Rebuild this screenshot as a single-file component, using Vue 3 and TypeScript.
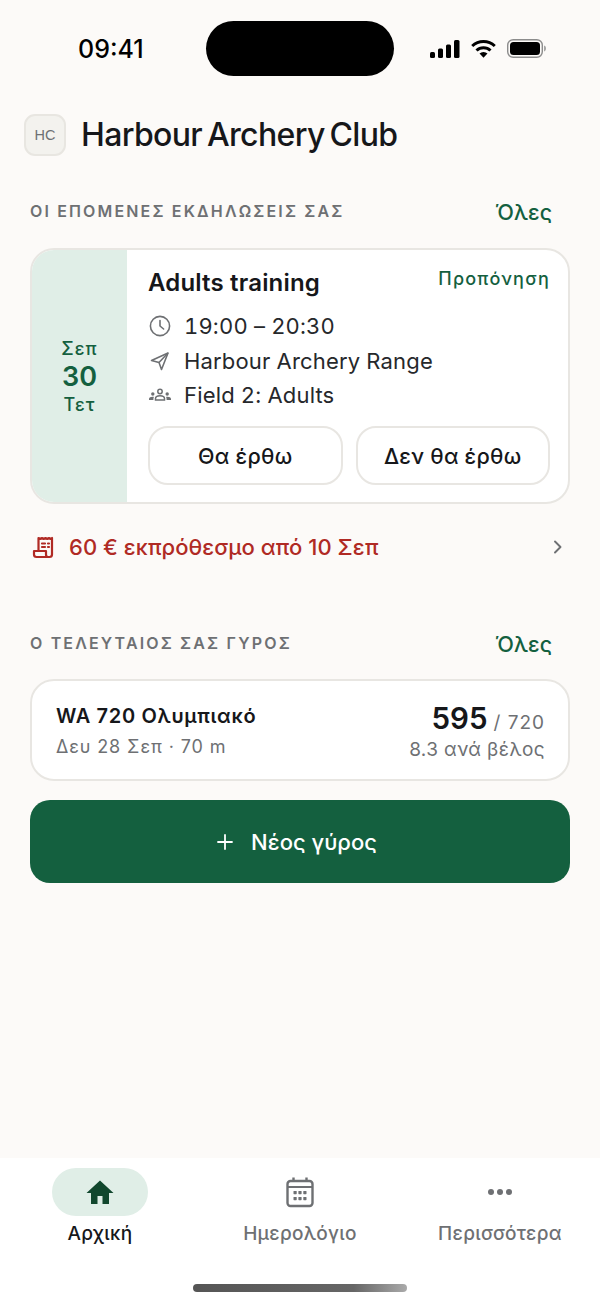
<script setup lang="ts">
const details = [
  { id: 'clock', text: '19:00 – 20:30' },
  { id: 'nav', text: 'Harbour Archery Range' },
  { id: 'group', text: 'Field 2: Adults' },
]
</script>

<template>
  <div class="page">
    <div class="status">
      <span class="time">09:41</span>
      <div class="island"></div>
      <div class="sys">
        <svg width="30" height="18" viewBox="0 0 30 18"><rect x="0" y="12" width="5" height="6" rx="1.5"/><rect x="8" y="8.500" width="5" height="9.500" rx="1.500"/><rect x="16" y="4.500" width="5" height="13.500" rx="1.500"/><rect x="24" y="0" width="5.500" height="18" rx="1.500"/></svg>
        <svg width="25" height="19" viewBox="0 0 25 19"><path d="M1.200 7a16.500 16.500 0 0 1 22.600 0" fill="none" stroke="#000" stroke-width="3"/><path d="M5.500 11.500a10 10 0 0 1 14 0" fill="none" stroke="#000" stroke-width="3"/><path d="M8.500 14.500a5.800 5.800 0 0 1 8 0L12.500 18.800z"/></svg>
        <svg width="40" height="19" viewBox="0 0 40 19"><rect x="0.700" y="0.700" width="34.600" height="17.600" rx="5.500" fill="none" stroke="#8c8c8c" stroke-width="1.400"/><rect x="3" y="3" width="30" height="13" rx="3.500"/><path d="M37 6.500c1.500.4 2 1.600 2 3s-.5 2.600-2 3z" fill="#a5a5a5"/></svg>
      </div>
    </div>

    <header class="brand">
      <div class="logo">HC</div>
      <h1>Harbour Archery Club</h1>
    </header>

    <main class="content">
      <div class="sec-head first">
        <h2>ΟΙ ΕΠΟΜΕΝΕΣ ΕΚΔΗΛΩΣΕΙΣ ΣΑΣ</h2>
        <a>Όλες</a>
      </div>

      <section class="card event">
        <div class="date">
          <span>Σεπ</span>
          <strong>30</strong>
          <span>Τετ</span>
        </div>
        <div class="body">
          <div class="title-row">
            <h3>Adults training</h3>
            <span class="tag">Προπόνηση</span>
          </div>
          <ul>
            <li v-for="d in details" :key="d.id">
              <svg v-if="d.id === 'clock'" width="24" height="24" viewBox="0 0 24 24" fill="none" stroke="#6e7073" stroke-width="1.600" stroke-linecap="round" stroke-linejoin="round"><circle cx="12" cy="12" r="9.600"/><path d="M12 6.500V12l3.600 3"/></svg>
              <svg v-else-if="d.id === 'nav'" width="24" height="24" viewBox="0 0 24 24" fill="none" stroke="#6e7073" stroke-width="1.600" stroke-linejoin="round"><path d="M20 4 3.500 11.500 11 13.500l2.500 7z"/><path d="M11 13.500 20 4"/></svg>
              <svg v-else width="24" height="24" viewBox="0 0 24 24" fill="#6e7073"><circle cx="12" cy="8.500" r="2.200" fill="none" stroke="#6e7073" stroke-width="1.500"/><path d="M7.500 17v-1.500c0-1.800 2-2.800 4.500-2.800s4.500 1 4.500 2.800V17z" fill="none" stroke="#6e7073" stroke-width="1.500"/><circle cx="4.800" cy="11" r="1.700"/><circle cx="19.200" cy="11" r="1.700"/><path d="M1 17v-1c0-1.500 1.600-2.300 3.600-2.300.5 0 1 .1 1.400.2-.5.6-.6 1.200-.6 3.100zM23 17v-1c0-1.500-1.600-2.300-3.600-2.300-.5 0-1 .1-1.400.2.500.6.600 1.200.6 3.100z"/></svg>
              <span>{{ d.text }}</span>
            </li>
          </ul>
          <div class="actions">
            <button>Θα έρθω</button>
            <button>Δεν θα έρθω</button>
          </div>
        </div>
      </section>

      <div class="due">
        <svg width="24" height="24" viewBox="0 0 24 24" fill="none" stroke="#b02a24" stroke-width="2.200" stroke-linejoin="round" stroke-linecap="round"><path d="M6.500 16V3l1.700 1L10 3l1.700 1 1.800-1 1.700 1L17 3l1.700 1 1.300-1v16.500a2.500 2.500 0 0 1-2.500 2.500H4.500A2.500 2.500 0 0 1 2 19.500V16h12v3.500c0 1.400 1 2.500 2 2.500"/><path d="M10 8.500h3M16 8.500h1M10 12h3M16 12h1"/></svg>
        <span>60 € εκπρόθεσμο από 10 Σεπ</span>
        <svg class="chev" width="14" height="14" viewBox="0 0 14 14" fill="none" stroke="#6e7073" stroke-width="1.900" stroke-linecap="round" stroke-linejoin="round"><path d="m4 1.500 5.500 5.500L4 12.500"/></svg>
      </div>

      <div class="sec-head second">
        <h2>Ο ΤΕΛΕΥΤΑΙΟΣ ΣΑΣ ΓΥΡΟΣ</h2>
        <a>Όλες</a>
      </div>

      <section class="card round">
        <div>
          <div class="r-name">WA 720 Ολυμπιακό</div>
          <div class="r-sub">Δευ 28 Σεπ · 70 m</div>
        </div>
        <div class="r-right">
          <div><strong>595</strong> <span>/ 720</span></div>
          <div class="r-avg">8.3 ανά βέλος</div>
        </div>
      </section>

      <button class="primary">
        <svg width="18" height="18" viewBox="0 0 18 18" fill="none" stroke="#fff" stroke-width="1.800" stroke-linecap="round"><path d="M9 2v14M2 9h14"/></svg>
        <span>Νέος γύρος</span>
      </button>
    </main>

    <nav class="tabs">
      <div class="tab active">
        <div class="pill">
          <svg width="30" height="30" viewBox="0 0 30 30" fill="#11472d"><path d="M15 3.500 1.500 16H6v11h6.500v-8h5v8H24V16h4.500z"/></svg>
        </div>
        <span>Αρχική</span>
      </div>
      <div class="tab">
        <div class="pill">
          <svg width="30" height="32" viewBox="0 0 30 32" fill="none"><rect x="2.500" y="5" width="25" height="25" rx="3" stroke="#6e7073" stroke-width="2.400"/><path d="M2.500 11h25" stroke="#6e7073" stroke-width="2"/><path d="M8.500 1.500v4M21.500 1.500v4" stroke="#6e7073" stroke-width="2.400"/><g fill="#6e7073"><rect x="8.500" y="15" width="3.200" height="3.200" rx="0.600"/><rect x="13.400" y="15" width="3.200" height="3.200" rx="0.600"/><rect x="18.300" y="15" width="3.200" height="3.200" rx="0.600"/><rect x="8.500" y="21" width="3.200" height="3.200" rx="0.600"/><rect x="13.400" y="21" width="3.200" height="3.200" rx="0.600"/><rect x="18.300" y="21" width="3.200" height="3.200" rx="0.600"/></g></svg>
        </div>
        <span>Ημερολόγιο</span>
      </div>
      <div class="tab">
        <div class="pill">
          <svg width="26" height="8" viewBox="0 0 26 8" fill="#6e7073"><circle cx="4" cy="4" r="3"/><circle cx="13" cy="4" r="3"/><circle cx="22" cy="4" r="3"/></svg>
        </div>
        <span>Περισσότερα</span>
      </div>
      <div class="home-bar"></div>
    </nav>
  </div>
</template>

<style>
html, body { margin: 0; background: #fcfaf8; }
</style>

<style scoped>
.page {
  width: 600px;
  height: 1304px;
  display: flex;
  flex-direction: column;
  background: #fcfaf8;
  font-family: Inter, "Noto Sans", sans-serif;
  color: #16171a;
  overflow: hidden;
}
.status {
  position: relative;
  height: 114px;
  box-sizing: border-box;
  flex: none;
  display: flex;
  justify-content: space-between;
  padding: 33px 53px 0 78px;
  align-items: flex-start;
}
.time { font-size: 25px; line-height: 32px; font-weight: 500; color: #000; letter-spacing: 0; }
.island {
  position: absolute;
  left: 206px;
  top: 21px;
  width: 188px;
  height: 55px;
  border-radius: 28px;
  background: #000;
}
.sys { display: flex; align-items: center; gap: 11px; padding-top: 6px; }
.brand { display: flex; align-items: center; gap: 15px; padding-left: 24px; height: 42px; flex: none; }
.logo {
  width: 42px;
  height: 42px;
  box-sizing: border-box;
  display: flex;
  align-items: center;
  justify-content: center;
  border: 2px solid #e8e6e1;
  border-radius: 11px;
  background: #f3f2ee;
  color: #6e7073;
  font-size: 14.500px;
  font-weight: 500;
  font-family: "Liberation Sans", sans-serif;
}
h1 { margin: 0; font-size: 32px; line-height: 40px; font-weight: 500; letter-spacing: -0.65px; word-spacing: -3px; color: #16171a; }
.content { padding: 0 30px; flex: 1; display: flex; flex-direction: column; }
.sec-head { display: flex; align-items: center; justify-content: space-between; padding-right: 18px; height: 28px; }
.sec-head.first { margin-top: 42px; margin-bottom: 22px; }
.sec-head.second { margin-top: 66px; margin-bottom: 21px; }
h2 { margin: 0; font-size: 16px; font-weight: 600; letter-spacing: 2.15px; color: #6e7073; transform: translateY(-1px); }
.sec-head a { font-size: 21.500px; font-weight: 500; color: #14603f; }
.card { background: #fff; border: 2px solid #e8e6e2; border-radius: 24px; box-sizing: border-box; }
.event { height: 256px; display: flex; overflow: hidden; }
.date {
  width: 95px;
  flex: none;
  box-sizing: border-box;
  padding-top: 2px;
  background: #e0eee7;
  color: #14603f;
  display: flex;
  flex-direction: column;
  align-items: center;
  justify-content: center;
  font-size: 18px;
  font-weight: 500;
  line-height: 24px;
  letter-spacing: 1px;
}
.date strong { font-size: 27px; font-weight: 600; line-height: 32px; letter-spacing: 0; }
.body { flex: 1; padding: 17px 18px 17px 21px; display: flex; flex-direction: column; }
.title-row { display: flex; justify-content: space-between; align-items: flex-start; height: 32px; }
h3 { margin: 0; font-size: 24px; line-height: 32px; font-weight: 600; letter-spacing: 0.17px; color: #16171a; }
.tag { font-size: 18px; line-height: 24px; font-weight: 500; color: #14603f; letter-spacing: 1.2px; }
ul { list-style: none; margin: 10px 0 0; padding: 0; }
li { display: flex; align-items: center; gap: 12px; height: 34.500px; font-size: 22px; letter-spacing: 0.17px; color: #26282b; font-variant-numeric: tabular-nums; }
.actions { display: grid; grid-template-columns: 1fr 1fr; gap: 13px; margin-top: auto; }
.actions button {
  height: 59px;
  border: 2px solid #e8e6e2;
  border-radius: 20px;
  background: #fff;
  font: 500 21.500px Inter, sans-serif;
  color: #16171a;
  letter-spacing: 0.25px;
  padding: 0;
}
.due { display: flex; align-items: center; gap: 13px; margin-top: 26px; height: 34px; padding-left: 2px; color: #b02a24; font-size: 22px; font-weight: 500; letter-spacing: 0.05px; }
.chev { margin-left: auto; margin-right: 5px; }
.round { height: 102px; display: flex; justify-content: space-between; align-items: center; padding: 2px 23px 0 24px; }
.r-name { font-size: 20px; line-height: 28px; font-weight: 600; letter-spacing: 0.65px; }
.r-sub { font-size: 18px; line-height: 28px; color: #6e7073; letter-spacing: 0.9px; margin-top: 3px; }
.r-right { text-align: right; color: #6e7073; }
.r-right strong { font-size: 29.500px; line-height: 36px; font-weight: 600; color: #16171a; margin-right: 1.500px; }
.r-right span { font-size: 19px; letter-spacing: 1px; }
.r-avg { font-size: 19px; line-height: 26px; letter-spacing: 0.4px; margin-top: 1px; }
.primary {
  height: 83px;
  margin-top: 19px;
  border: none;
  border-radius: 20px;
  background: #14603f;
  color: #fff;
  display: flex;
  align-items: center;
  justify-content: center;
  gap: 17px;
  font: 500 22px Inter, sans-serif;
  padding: 0 7px 0 0;
}
.tabs {
  position: relative;
  height: 146px;
  flex: none;
  background: #fff;
  display: grid;
  grid-template-columns: repeat(3, 200px);
  padding-top: 10px;
  box-sizing: border-box;
  align-items: start;
}
.tab { display: flex; flex-direction: column; align-items: center; color: #6e7073; font-size: 19px; font-weight: 500; letter-spacing: 0.3px; }
.tab span { margin-top: 3px; line-height: 30px; }
.tab.active span { color: #16171a; font-weight: 500; }
.pill { width: 96px; height: 48px; border-radius: 24px; display: flex; align-items: center; justify-content: center; }
.active .pill { background: #e0eee7; }
.home-bar {
  position: absolute;
  left: 193px;
  top: 126px;
  width: 214px;
  height: 8px;
  border-radius: 4px;
  background: linear-gradient(90deg, #555 0%, #666 75%, #aaa 100%);
}
</style>
